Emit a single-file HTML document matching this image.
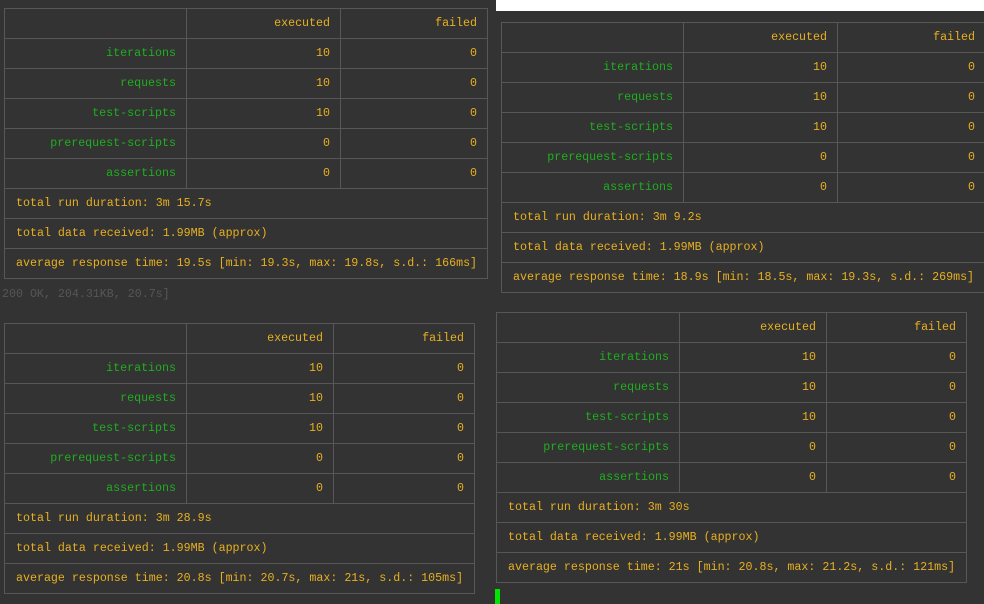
<!DOCTYPE html>
<html><head><meta charset="utf-8"><style>
*{margin:0;padding:0;box-sizing:border-box}
body{width:984px;height:604px;overflow:hidden;background:#333333;position:relative;font-family:"Liberation Mono",monospace;font-size:11.65px;}
.white{position:absolute;left:496px;top:0;width:488px;height:11px;background:#fff}
table{position:absolute;border-collapse:collapse;table-layout:fixed}
td{border:1px solid #575757;height:30px;padding:1px 10px 0 11px;text-align:right;color:#e8b020;white-space:nowrap;overflow:hidden;line-height:28px}
td.g{color:#1fae1f}
td.s{text-align:left;padding-left:11px}
.gray{position:absolute;left:2px;top:288px;color:#565656}
.cur{position:absolute;left:495px;top:589px;width:5px;height:15px;background:#00e600}
</style></head><body>
<div class="white"></div>

<table style="left:4px;top:8px;width:483px">
<colgroup><col style="width:182px"><col style="width:154px"><col style="width:147px"></colgroup>
<tr><td></td><td>executed</td><td>failed</td></tr>
<tr><td class="g">iterations</td><td>10</td><td>0</td></tr>
<tr><td class="g">requests</td><td>10</td><td>0</td></tr>
<tr><td class="g">test-scripts</td><td>10</td><td>0</td></tr>
<tr><td class="g">prerequest-scripts</td><td>0</td><td>0</td></tr>
<tr><td class="g">assertions</td><td>0</td><td>0</td></tr>
<tr><td colspan="3" class="s">total run duration: 3m 15.7s</td></tr>
<tr><td colspan="3" class="s">total data received: 1.99MB (approx)</td></tr>
<tr><td colspan="3" class="s">average response time: 19.5s [min: 19.3s, max: 19.8s, s.d.: 166ms]</td></tr>
</table>

<div class="gray">200 OK, 204.31KB, 20.7s]</div>

<table style="left:501px;top:22px;width:486px">
<colgroup><col style="width:182px"><col style="width:154px"><col style="width:150px"></colgroup>
<tr><td></td><td>executed</td><td style="padding-right:12px">failed</td></tr>
<tr><td class="g">iterations</td><td>10</td><td style="padding-right:12px">0</td></tr>
<tr><td class="g">requests</td><td>10</td><td style="padding-right:12px">0</td></tr>
<tr><td class="g">test-scripts</td><td>10</td><td style="padding-right:12px">0</td></tr>
<tr><td class="g">prerequest-scripts</td><td>0</td><td style="padding-right:12px">0</td></tr>
<tr><td class="g">assertions</td><td>0</td><td style="padding-right:12px">0</td></tr>
<tr><td colspan="3" class="s">total run duration: 3m 9.2s</td></tr>
<tr><td colspan="3" class="s">total data received: 1.99MB (approx)</td></tr>
<tr><td colspan="3" class="s">average response time: 18.9s [min: 18.5s, max: 19.3s, s.d.: 269ms]</td></tr>
</table>

<table style="left:4px;top:323px;width:470px">
<colgroup><col style="width:182px"><col style="width:147px"><col style="width:141px"></colgroup>
<tr><td></td><td>executed</td><td>failed</td></tr>
<tr><td class="g">iterations</td><td>10</td><td>0</td></tr>
<tr><td class="g">requests</td><td>10</td><td>0</td></tr>
<tr><td class="g">test-scripts</td><td>10</td><td>0</td></tr>
<tr><td class="g">prerequest-scripts</td><td>0</td><td>0</td></tr>
<tr><td class="g">assertions</td><td>0</td><td>0</td></tr>
<tr><td colspan="3" class="s">total run duration: 3m 28.9s</td></tr>
<tr><td colspan="3" class="s">total data received: 1.99MB (approx)</td></tr>
<tr><td colspan="3" class="s">average response time: 20.8s [min: 20.7s, max: 21s, s.d.: 105ms]</td></tr>
</table>

<table style="left:496px;top:312px;width:470px">
<colgroup><col style="width:183px"><col style="width:147px"><col style="width:140px"></colgroup>
<tr><td></td><td>executed</td><td>failed</td></tr>
<tr><td class="g">iterations</td><td>10</td><td>0</td></tr>
<tr><td class="g">requests</td><td>10</td><td>0</td></tr>
<tr><td class="g">test-scripts</td><td>10</td><td>0</td></tr>
<tr><td class="g">prerequest-scripts</td><td>0</td><td>0</td></tr>
<tr><td class="g">assertions</td><td>0</td><td>0</td></tr>
<tr><td colspan="3" class="s">total run duration: 3m 30s</td></tr>
<tr><td colspan="3" class="s">total data received: 1.99MB (approx)</td></tr>
<tr><td colspan="3" class="s">average response time: 21s [min: 20.8s, max: 21.2s, s.d.: 121ms]</td></tr>
</table>

<div class="cur"></div>
</body></html>
